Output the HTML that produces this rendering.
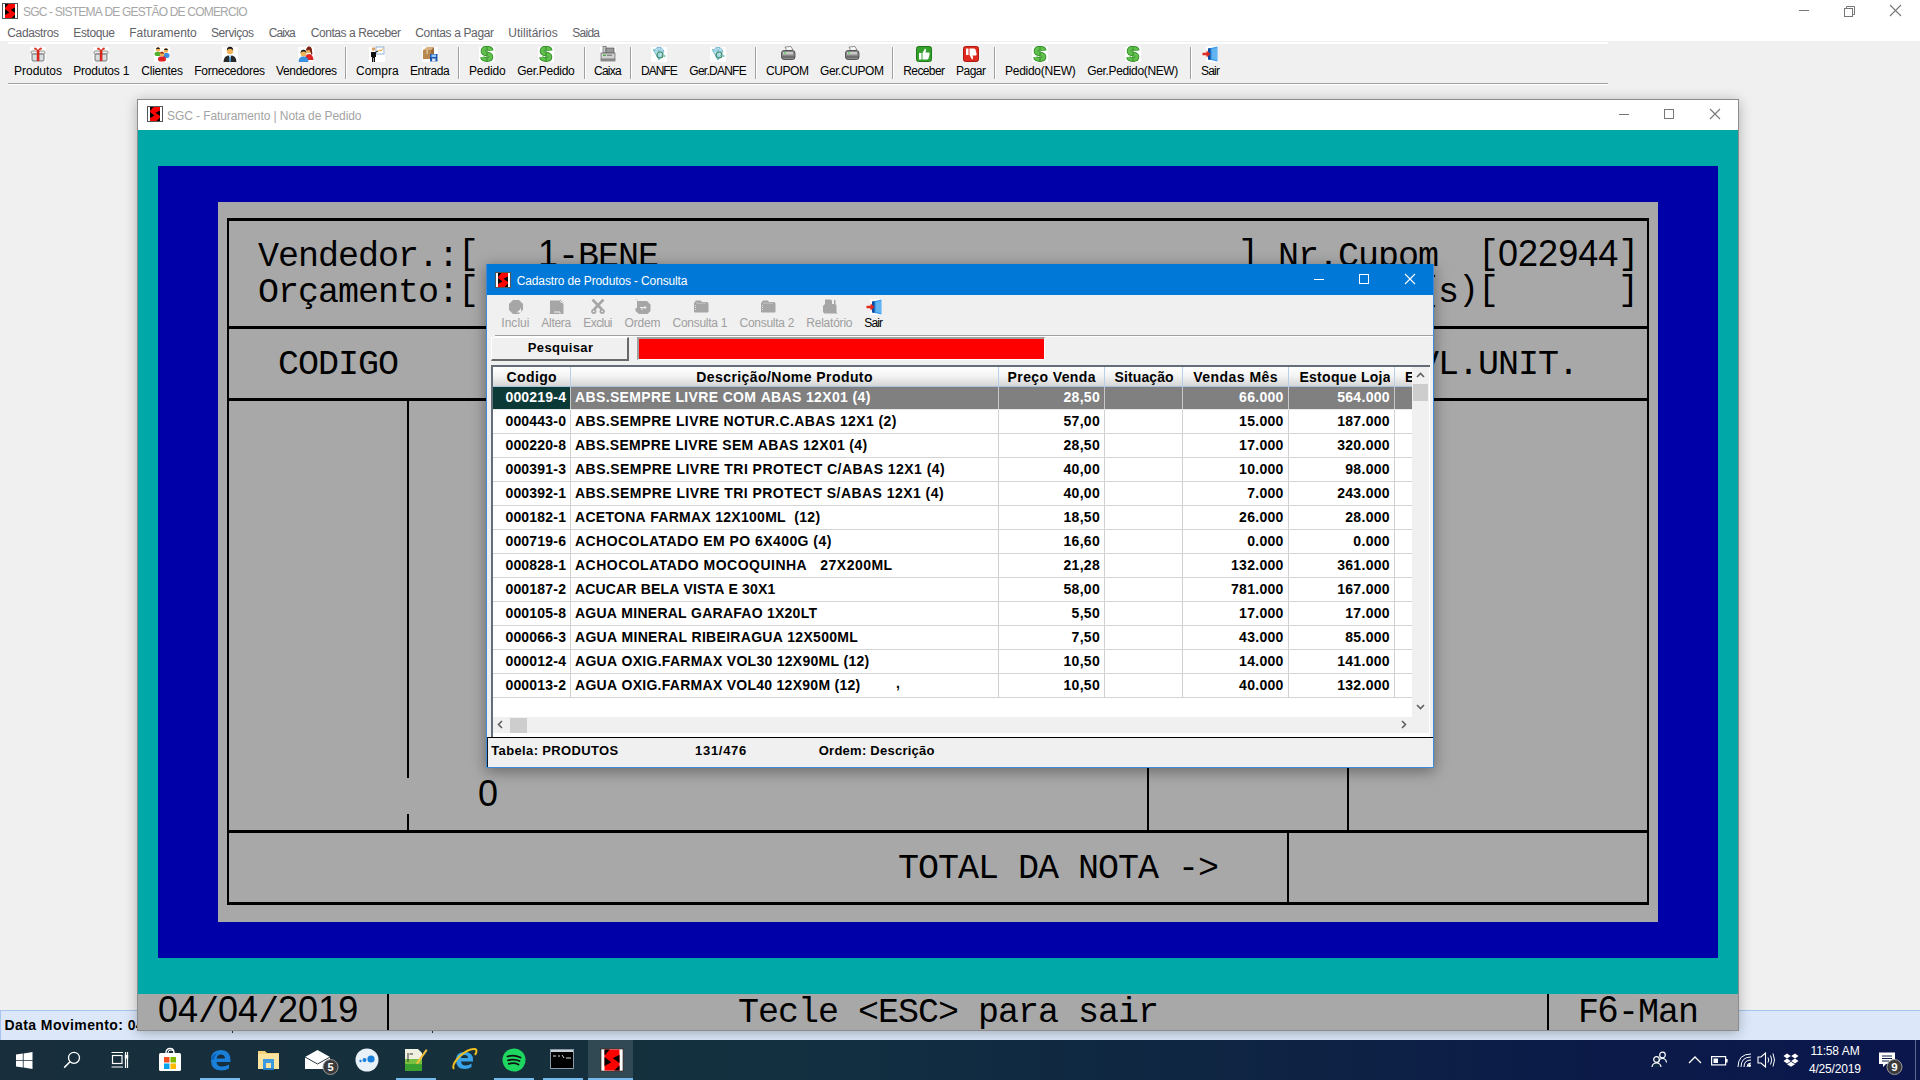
<!DOCTYPE html>
<html><head><meta charset="utf-8"><style>
*{margin:0;padding:0;box-sizing:border-box}
html,body{width:1920px;height:1080px;overflow:hidden;background:#f0f0f0;font-family:"Liberation Sans",sans-serif}
div{position:absolute}
.t{white-space:nowrap;line-height:20px;height:20px}
.z{font-family:'Liberation Sans',sans-serif;font-size:36px;letter-spacing:-0.016px;line-height:0}
.b{position:relative;top:-2px}
.dos{font-family:"Liberation Mono",monospace;font-size:35px;letter-spacing:-1px;line-height:36px;height:36px;white-space:nowrap;color:#000}
</style></head>
<body><div style="left:0px;top:0px;width:1920px;height:41px;background:#ffffff;"></div><div style="left:0px;top:41px;width:1920px;height:999px;background:#f0f0f0;"></div><svg style="position:absolute;left:2px;top:3px" width="16" height="16" viewBox="0 0 16 16"><rect x="0.5" y="0.5" width="15" height="15" fill="#fff" stroke="#555" stroke-width="1"/><rect x="3" y="1" width="10" height="14" fill="#f00"/><path d="M3 1 H6.5 L3 5Z M13 4.5 L8.5 6.8 L13 10Z M3 6 L7.5 9.5 L3 12Z M13 15 H9.5 L13 11.5Z" fill="#000"/></svg><div class="t" style="left:23.00px;top:2px;font-size:12px;font-weight:normal;color:#a6a6a6;letter-spacing:-0.805px;">SGC&nbsp;-&nbsp;SISTEMA&nbsp;DE&nbsp;GESTÃO&nbsp;DE&nbsp;COMERCIO</div><div style="left:1799px;top:10px;width:10px;height:1px;background:#777;"></div><svg style="position:absolute;left:1843px;top:4px" width="14" height="14" viewBox="0 0 14 14"><rect x="1.5" y="4.5" width="8" height="8" fill="none" stroke="#777"/><path d="M3.5 4.5 V2.5 H11.5 V10.5 H9.5" fill="none" stroke="#777"/></svg><svg style="position:absolute;left:1889px;top:4px" width="13" height="13" viewBox="0 0 13 13"><path d="M1 1 L12 12 M12 1 L1 12" stroke="#777" stroke-width="1.1"/></svg><div class="t" style="left:7.30px;top:23px;font-size:12px;font-weight:normal;color:#626268;letter-spacing:-0.374px;">Cadastros</div><div class="t" style="left:73.30px;top:23px;font-size:12px;font-weight:normal;color:#626268;letter-spacing:-0.389px;">Estoque</div><div class="t" style="left:129.30px;top:23px;font-size:12px;font-weight:normal;color:#626268;letter-spacing:-0.063px;">Faturamento</div><div class="t" style="left:211.00px;top:23px;font-size:12px;font-weight:normal;color:#626268;letter-spacing:-0.431px;">Serviços</div><div class="t" style="left:268.70px;top:23px;font-size:12px;font-weight:normal;color:#626268;letter-spacing:-0.920px;">Caixa</div><div class="t" style="left:310.70px;top:23px;font-size:12px;font-weight:normal;color:#626268;letter-spacing:-0.428px;">Contas&nbsp;a&nbsp;Receber</div><div class="t" style="left:415.30px;top:23px;font-size:12px;font-weight:normal;color:#626268;letter-spacing:-0.360px;">Contas&nbsp;a&nbsp;Pagar</div><div class="t" style="left:508.30px;top:23px;font-size:12px;font-weight:normal;color:#626268;letter-spacing:0.006px;">Utilitários</div><div class="t" style="left:572.30px;top:23px;font-size:12px;font-weight:normal;color:#626268;letter-spacing:-0.748px;">Saida</div><div style="left:8px;top:42px;width:1600px;height:2px;background:#ffffff;"></div><div style="left:8px;top:83px;width:1600px;height:1px;background:#a0a0a0;"></div><div style="left:8px;top:84px;width:1600px;height:1px;background:#ffffff;"></div><div style="left:345px;top:47px;width:1px;height:32px;background:#a0a0a0;"></div><div style="left:346px;top:47px;width:1px;height:32px;background:#ffffff;"></div><div style="left:458px;top:47px;width:1px;height:32px;background:#a0a0a0;"></div><div style="left:459px;top:47px;width:1px;height:32px;background:#ffffff;"></div><div style="left:584px;top:47px;width:1px;height:32px;background:#a0a0a0;"></div><div style="left:585px;top:47px;width:1px;height:32px;background:#ffffff;"></div><div style="left:630px;top:47px;width:1px;height:32px;background:#a0a0a0;"></div><div style="left:631px;top:47px;width:1px;height:32px;background:#ffffff;"></div><div style="left:755px;top:47px;width:1px;height:32px;background:#a0a0a0;"></div><div style="left:756px;top:47px;width:1px;height:32px;background:#ffffff;"></div><div style="left:892px;top:47px;width:1px;height:32px;background:#a0a0a0;"></div><div style="left:893px;top:47px;width:1px;height:32px;background:#ffffff;"></div><div style="left:994px;top:47px;width:1px;height:32px;background:#a0a0a0;"></div><div style="left:995px;top:47px;width:1px;height:32px;background:#ffffff;"></div><div style="left:1190px;top:47px;width:1px;height:32px;background:#a0a0a0;"></div><div style="left:1191px;top:47px;width:1px;height:32px;background:#ffffff;"></div><svg style="position:absolute;left:30px;top:46px" width="16" height="16" viewBox="0 0 16 16"><rect x="0" y="1" width="16" height="15" fill="#fff"/><rect x="1" y="5" width="14" height="3" rx="1" fill="#f4f4f4" stroke="#777" stroke-width="0.8"/><rect x="2" y="8" width="12" height="7" rx="1" fill="#d8dde0" stroke="#666" stroke-width="0.9"/><rect x="6.8" y="4" width="2.6" height="11" fill="#d8261c"/><path d="M8 4 Q5 0 4 2.5 Q4 4 8 4 Q12 4 12 2.5 Q11 0 8 4Z" fill="#e03a2a"/></svg><div class="t" style="left:14.00px;top:61px;font-size:12px;font-weight:normal;color:#000;letter-spacing:-0.004px;">Produtos</div><svg style="position:absolute;left:93px;top:46px" width="16" height="16" viewBox="0 0 16 16"><rect x="0" y="1" width="16" height="15" fill="#fff"/><rect x="1" y="5" width="14" height="3" rx="1" fill="#f4f4f4" stroke="#777" stroke-width="0.8"/><rect x="2" y="8" width="12" height="7" rx="1" fill="#d8dde0" stroke="#666" stroke-width="0.9"/><rect x="6.8" y="4" width="2.6" height="11" fill="#d8261c"/><path d="M8 4 Q5 0 4 2.5 Q4 4 8 4 Q12 4 12 2.5 Q11 0 8 4Z" fill="#e03a2a"/></svg><div class="t" style="left:73.30px;top:61px;font-size:12px;font-weight:normal;color:#000;letter-spacing:-0.226px;">Produtos&nbsp;1</div><svg style="position:absolute;left:154px;top:46px" width="16" height="16" viewBox="0 0 16 16"><rect x="0" y="1" width="16" height="15" fill="#fff"/><circle cx="4" cy="3.5" r="2.2" fill="#f0b050"/><path d="M1.8 3 Q4 -0.5 6.2 3" fill="#222"/><rect x="0.5" y="6" width="7" height="4" rx="2" fill="#4caf2a"/><circle cx="12" cy="4.5" r="2.2" fill="#f0b050"/><path d="M9.8 4 Q12 0.5 14.2 4" fill="#222"/><rect x="9" y="7" width="6.5" height="5" rx="2.5" fill="#3a8fe0"/><circle cx="8" cy="8" r="2.4" fill="#f0b050"/><path d="M5.6 7.5 Q8 4 10.4 7.5" fill="#8a2a10"/><rect x="4" y="10.5" width="8" height="5" rx="2.5" fill="#e02020"/></svg><div class="t" style="left:141.30px;top:61px;font-size:12px;font-weight:normal;color:#000;letter-spacing:-0.236px;">Clientes</div><svg style="position:absolute;left:222px;top:46px" width="16" height="16" viewBox="0 0 16 16"><rect x="0" y="1" width="16" height="15" fill="#fff"/><circle cx="8" cy="5" r="3.2" fill="#f2b45a"/><path d="M4.8 4.5 Q5 0.5 8 0.8 Q11 0.5 11.2 4.5 Q10 2.5 8 2.7 Q6 2.5 4.8 4.5Z" fill="#1a1a1a"/><path d="M1.5 16 Q1.5 9.5 8 9 Q14.5 9.5 14.5 16Z" fill="#2a2a2a"/><path d="M7 9.5 H9 L8.6 16 H7.4Z" fill="#5ab0f0"/><path d="M6 9.3 L8 11 L10 9.3" fill="#fff"/></svg><div class="t" style="left:194.30px;top:61px;font-size:12px;font-weight:normal;color:#000;letter-spacing:-0.303px;">Fornecedores</div><svg style="position:absolute;left:298px;top:46px" width="16" height="16" viewBox="0 0 16 16"><rect x="0" y="1" width="16" height="15" fill="#fff"/><circle cx="11" cy="4.5" r="2.8" fill="#f2b45a"/><path d="M8 4 Q9 0 11.5 0.5 Q14 1 14 5 Q15 8 13.5 9 Q13 6 11 3.5 Q9.5 5 8 4Z" fill="#7a1f10"/><path d="M7 14 Q7 8 11 8 Q15 8 15.5 14Z" fill="#e02222"/><circle cx="5.5" cy="7.5" r="3" fill="#f2b45a"/><path d="M2.5 7 Q3 3.5 5.5 3.8 Q8 3.5 8.5 7 Q7 5.5 5.5 5.6 Q4 5.5 2.5 7Z" fill="#1a1a1a"/><path d="M0.5 16 Q0.5 10.5 5.5 10.5 Q10.5 10.5 10.5 16Z" fill="#3a90e0"/></svg><div class="t" style="left:276.00px;top:61px;font-size:12px;font-weight:normal;color:#000;letter-spacing:-0.339px;">Vendedores</div><svg style="position:absolute;left:369px;top:46px" width="16" height="16" viewBox="0 0 16 16"><rect x="0" y="1" width="16" height="15" fill="#fff"/><rect x="7" y="1" width="8" height="7" fill="#fff" stroke="#7aa0d0" stroke-width="0.8"/><path d="M8.5 6 L10.5 4 L12 5 L14 2.5" stroke="#e0a020" fill="none"/><circle cx="4.5" cy="3" r="1.8" fill="#e0a060"/><path d="M2 6 H7 V11 H6 V16 H4.8 V12 H4.2 V16 H3 V11 H2Z" fill="#111"/><path d="M6 6.5 L9 5" stroke="#111" stroke-width="1"/></svg><div class="t" style="left:356.00px;top:61px;font-size:12px;font-weight:normal;color:#000;letter-spacing:0.004px;">Compra</div><svg style="position:absolute;left:422px;top:46px" width="16" height="16" viewBox="0 0 16 16"><rect x="0" y="1" width="16" height="15" fill="#fff"/><path d="M1 4 L5 1 H12 L9 4Z" fill="#d8b080"/><rect x="1" y="4" width="8" height="9" fill="#b88850"/><path d="M9 4 L12 1 V10 L9 13Z" fill="#9a6a38"/><rect x="4.5" y="4" width="1.2" height="4" fill="#e8d0a0"/><rect x="8" y="8" width="7.5" height="7.5" fill="#1a5ab0"/><rect x="9.5" y="8.5" width="4.5" height="2.5" fill="#9ac8f8"/><rect x="10" y="12.5" width="3.5" height="3" fill="#dde"/></svg><div class="t" style="left:410.00px;top:61px;font-size:12px;font-weight:normal;color:#000;letter-spacing:-0.388px;">Entrada</div><svg style="position:absolute;left:479px;top:46px" width="16" height="16" viewBox="0 0 16 16"><rect x="0" y="1" width="16" height="15" fill="#fff"/><path d="M12.3 4.6 Q11.8 2.2 8 2.2 Q4 2.2 4 5 Q4 7.6 8 8 Q12 8.4 12 11 Q12 13.6 8 13.6 Q4 13.6 3.4 11" fill="none" stroke="#2e8a22" stroke-width="4.6"/><path d="M12.3 4.6 Q11.8 2.2 8 2.2 Q4 2.2 4 5 Q4 7.6 8 8 Q12 8.4 12 11 Q12 13.6 8 13.6 Q4 13.6 3.4 11" fill="none" stroke="#62c04e" stroke-width="3"/><path d="M8 1 V15" stroke="#3a9a2a" stroke-width="1.2"/></svg><div class="t" style="left:469.00px;top:61px;font-size:12px;font-weight:normal;color:#000;letter-spacing:-0.133px;">Pedido</div><svg style="position:absolute;left:538px;top:46px" width="16" height="16" viewBox="0 0 16 16"><rect x="0" y="1" width="16" height="15" fill="#fff"/><path d="M12.3 4.6 Q11.8 2.2 8 2.2 Q4 2.2 4 5 Q4 7.6 8 8 Q12 8.4 12 11 Q12 13.6 8 13.6 Q4 13.6 3.4 11" fill="none" stroke="#2e8a22" stroke-width="4.6"/><path d="M12.3 4.6 Q11.8 2.2 8 2.2 Q4 2.2 4 5 Q4 7.6 8 8 Q12 8.4 12 11 Q12 13.6 8 13.6 Q4 13.6 3.4 11" fill="none" stroke="#62c04e" stroke-width="3"/><path d="M8 1 V15" stroke="#3a9a2a" stroke-width="1.2"/></svg><div class="t" style="left:517.30px;top:61px;font-size:12px;font-weight:normal;color:#000;letter-spacing:-0.293px;">Ger.Pedido</div><svg style="position:absolute;left:600px;top:46px" width="16" height="16" viewBox="0 0 16 16"><rect x="0" y="1" width="16" height="15" fill="#fff"/><rect x="3" y="0.5" width="3" height="6" fill="#ccc" stroke="#666" stroke-width="0.7"/><rect x="6" y="2" width="8" height="5" fill="#999" stroke="#555" stroke-width="0.7"/><rect x="1" y="7" width="14" height="6" fill="#d0d0d0" stroke="#666" stroke-width="0.8"/><rect x="3" y="8.5" width="3" height="1.5" fill="#5a5"/><rect x="7" y="8.5" width="5" height="1.5" fill="#888"/><rect x="0.5" y="13" width="15" height="2.5" fill="#888"/></svg><div class="t" style="left:594.00px;top:61px;font-size:12px;font-weight:normal;color:#000;letter-spacing:-0.745px;">Caixa</div><svg style="position:absolute;left:651px;top:46px" width="16" height="16" viewBox="0 0 16 16"><rect x="0" y="1" width="16" height="15" fill="#fff"/><path d="M3 5 L6 1.5 H10 L13 5 L8 14Z" fill="#bfe4f0" stroke="#6ab0cc" stroke-width="0.8"/><path d="M3 5 H13 M6 1.5 L8 5 L10 1.5 M8 5 V14" stroke="#6ab0cc" stroke-width="0.6" fill="none"/><circle cx="9" cy="9" r="3" fill="none" stroke="#3a8a5a" stroke-width="1.2"/><circle cx="3" cy="4" r="1.2" fill="#8cc"/><circle cx="13.5" cy="10" r="1.2" fill="#8cc"/></svg><div class="t" style="left:641.00px;top:61px;font-size:12px;font-weight:normal;color:#000;letter-spacing:-0.993px;">DANFE</div><svg style="position:absolute;left:710px;top:46px" width="16" height="16" viewBox="0 0 16 16"><rect x="0" y="1" width="16" height="15" fill="#fff"/><path d="M3 5 L6 1.5 H10 L13 5 L8 14Z" fill="#bfe4f0" stroke="#6ab0cc" stroke-width="0.8"/><path d="M3 5 H13 M6 1.5 L8 5 L10 1.5 M8 5 V14" stroke="#6ab0cc" stroke-width="0.6" fill="none"/><circle cx="9" cy="9" r="3" fill="none" stroke="#3a8a5a" stroke-width="1.2"/><circle cx="3" cy="4" r="1.2" fill="#8cc"/><circle cx="13.5" cy="10" r="1.2" fill="#8cc"/></svg><div class="t" style="left:689.30px;top:61px;font-size:12px;font-weight:normal;color:#000;letter-spacing:-0.743px;">Ger.DANFE</div><svg style="position:absolute;left:780px;top:46px" width="16" height="16" viewBox="0 0 16 16"><path d="M5 1 L11 0.5 L13 4 L7 5Z" fill="#fafafa" stroke="#666" stroke-width="0.7"/><path d="M1.5 7 Q1.5 4.5 4 4.5 H12.5 Q15 4.5 15 7 V11 Q15 13.5 12.5 13.5 H4 Q1.5 13.5 1.5 11Z" fill="#888" stroke="#444" stroke-width="0.8"/><rect x="3" y="6" width="10" height="2.5" fill="#c8c8c8"/><rect x="4" y="6.3" width="2" height="1" fill="#3c3"/><path d="M2 11 H15" stroke="#555" stroke-width="1"/></svg><div class="t" style="left:766.00px;top:61px;font-size:12px;font-weight:normal;color:#000;letter-spacing:-0.417px;">CUPOM</div><svg style="position:absolute;left:844px;top:46px" width="16" height="16" viewBox="0 0 16 16"><path d="M5 1 L11 0.5 L13 4 L7 5Z" fill="#fafafa" stroke="#666" stroke-width="0.7"/><path d="M1.5 7 Q1.5 4.5 4 4.5 H12.5 Q15 4.5 15 7 V11 Q15 13.5 12.5 13.5 H4 Q1.5 13.5 1.5 11Z" fill="#888" stroke="#444" stroke-width="0.8"/><rect x="3" y="6" width="10" height="2.5" fill="#c8c8c8"/><rect x="4" y="6.3" width="2" height="1" fill="#3c3"/><path d="M2 11 H15" stroke="#555" stroke-width="1"/></svg><div class="t" style="left:820.00px;top:61px;font-size:12px;font-weight:normal;color:#000;letter-spacing:-0.418px;">Ger.CUPOM</div><svg style="position:absolute;left:916px;top:46px" width="16" height="16" viewBox="0 0 16 16"><rect x="0.5" y="0.5" width="15" height="15" rx="2" fill="#34a02c" stroke="#1e7a1a"/><path d="M3 7 H5.5 V13.5 H3Z" fill="#fff"/><path d="M6.5 13.5 V7 L9 2.5 Q10.5 2.5 10 5 L9.5 6.5 H13 Q14 7 13.5 8.5 L12.5 12.5 Q12 13.5 11 13.5Z" fill="#fff"/></svg><div class="t" style="left:903.30px;top:61px;font-size:12px;font-weight:normal;color:#000;letter-spacing:-0.609px;">Receber</div><svg style="position:absolute;left:963px;top:46px" width="16" height="16" viewBox="0 0 16 16"><rect x="0.5" y="0.5" width="15" height="15" rx="2" fill="#e02a1e" stroke="#aa1a10"/><path d="M3 2.5 H5.5 V9 H3Z" fill="#fff"/><path d="M6.5 2.5 V9 L9 13.5 Q10.5 13.5 10 11 L9.5 9.5 H13 Q14 9 13.5 7.5 L12.5 3.5 Q12 2.5 11 2.5Z" fill="#fff"/></svg><div class="t" style="left:956.00px;top:61px;font-size:12px;font-weight:normal;color:#000;letter-spacing:-0.505px;">Pagar</div><svg style="position:absolute;left:1032px;top:46px" width="16" height="16" viewBox="0 0 16 16"><rect x="0" y="1" width="16" height="15" fill="#fff"/><path d="M12.3 4.6 Q11.8 2.2 8 2.2 Q4 2.2 4 5 Q4 7.6 8 8 Q12 8.4 12 11 Q12 13.6 8 13.6 Q4 13.6 3.4 11" fill="none" stroke="#2e8a22" stroke-width="4.6"/><path d="M12.3 4.6 Q11.8 2.2 8 2.2 Q4 2.2 4 5 Q4 7.6 8 8 Q12 8.4 12 11 Q12 13.6 8 13.6 Q4 13.6 3.4 11" fill="none" stroke="#62c04e" stroke-width="3"/><path d="M8 1 V15" stroke="#3a9a2a" stroke-width="1.2"/></svg><div class="t" style="left:1005.00px;top:61px;font-size:12px;font-weight:normal;color:#000;letter-spacing:-0.265px;">Pedido(NEW)</div><svg style="position:absolute;left:1125px;top:46px" width="16" height="16" viewBox="0 0 16 16"><rect x="0" y="1" width="16" height="15" fill="#fff"/><path d="M12.3 4.6 Q11.8 2.2 8 2.2 Q4 2.2 4 5 Q4 7.6 8 8 Q12 8.4 12 11 Q12 13.6 8 13.6 Q4 13.6 3.4 11" fill="none" stroke="#2e8a22" stroke-width="4.6"/><path d="M12.3 4.6 Q11.8 2.2 8 2.2 Q4 2.2 4 5 Q4 7.6 8 8 Q12 8.4 12 11 Q12 13.6 8 13.6 Q4 13.6 3.4 11" fill="none" stroke="#62c04e" stroke-width="3"/><path d="M8 1 V15" stroke="#3a9a2a" stroke-width="1.2"/></svg><div class="t" style="left:1087.30px;top:61px;font-size:12px;font-weight:normal;color:#000;letter-spacing:-0.359px;">Ger.Pedido(NEW)</div><svg style="position:absolute;left:1202px;top:46px" width="16" height="16" viewBox="0 0 16 16"><rect x="4" y="0" width="12" height="16" fill="#fff"/><path d="M6.5 2.5 L15.5 0.5 V15.5 L6.5 13.5Z" fill="#3a9ae8"/><path d="M10 3 L15 1.8 V14.2 L10 13Z" fill="#62b4f0"/><path d="M6 2.5 L8.5 2 V14 L6 13.5Z" fill="#0a4aa0"/><path d="M0.5 6.8 H4.5 V4.5 L8.5 8 L4.5 11.5 V9.2 H0.5Z" fill="#e02a20"/></svg><div class="t" style="left:1201.00px;top:61px;font-size:12px;font-weight:normal;color:#000;letter-spacing:-0.780px;">Sair</div><div style="left:0px;top:1010px;width:1920px;height:30px;background:#dce8fa;"></div><div style="left:0px;top:1010px;width:1920px;height:1px;background:#a6c4ee;"></div><div style="left:0px;top:1010px;width:1px;height:30px;background:#a6c4ee;"></div><div class="t" style="left:4.60px;top:1015px;font-size:14px;font-weight:bold;color:#000;letter-spacing:0.000px;letter-spacing:0.4px">Data&nbsp;Movimento:&nbsp;04/04/2019</div><div style="left:232px;top:1030px;width:1px;height:3px;background:#333;"></div><div style="left:432px;top:1030px;width:1px;height:3px;background:#333;"></div><div style="left:137px;top:99px;width:1602px;height:932px;box-shadow:0 2px 12px rgba(0,0,0,0.28)"></div><div style="left:137px;top:99px;width:1602px;height:932px;background:#8c8c8c;"></div><div style="left:138px;top:100px;width:1600px;height:30px;background:#ffffff;"></div><svg style="position:absolute;left:147px;top:106px" width="16" height="16" viewBox="0 0 16 16"><rect x="0.5" y="0.5" width="15" height="15" fill="#fff" stroke="#555" stroke-width="1"/><rect x="3" y="1" width="10" height="14" fill="#f00"/><path d="M3 1 H6.5 L3 5Z M13 4.5 L8.5 6.8 L13 10Z M3 6 L7.5 9.5 L3 12Z M13 15 H9.5 L13 11.5Z" fill="#000"/></svg><div class="t" style="left:167.00px;top:106px;font-size:12px;font-weight:normal;color:#a3a3a3;letter-spacing:-0.082px;">SGC&nbsp;-&nbsp;Faturamento&nbsp;|&nbsp;Nota&nbsp;de&nbsp;Pedido</div><div style="left:1619px;top:114px;width:10px;height:1px;background:#777;"></div><svg style="position:absolute;left:1663px;top:108px" width="12" height="12" viewBox="0 0 12 12"><rect x="1.5" y="1.5" width="9" height="9" fill="none" stroke="#777"/></svg><svg style="position:absolute;left:1709px;top:108px" width="12" height="12" viewBox="0 0 12 12"><path d="M1 1 L11 11 M11 1 L1 11" stroke="#777" stroke-width="1.1"/></svg><div style="left:138px;top:130px;width:1600px;height:900px;background:#00a8a8;"></div><div style="left:158px;top:166px;width:1560px;height:792px;background:#0000a8;"></div><div style="left:218px;top:202px;width:1440px;height:720px;background:#a8a8a8;"></div><div style="left:138px;top:994px;width:1600px;height:36px;background:#a8a8a8;"></div><div style="left:227px;top:218px;width:1422px;height:3px;background:#000;"></div><div style="left:227px;top:326px;width:1422px;height:3px;background:#000;"></div><div style="left:227px;top:398px;width:1422px;height:3px;background:#000;"></div><div style="left:227px;top:830px;width:1422px;height:3px;background:#000;"></div><div style="left:227px;top:902px;width:1422px;height:3px;background:#000;"></div><div style="left:227px;top:218px;width:2px;height:687px;background:#000;"></div><div style="left:1647px;top:218px;width:2px;height:687px;background:#000;"></div><div style="left:407px;top:398px;width:2px;height:380px;background:#000;"></div><div style="left:407px;top:814px;width:2px;height:19px;background:#000;"></div><div style="left:1147px;top:398px;width:2px;height:435px;background:#000;"></div><div style="left:1347px;top:398px;width:2px;height:435px;background:#000;"></div><div style="left:1287px;top:830px;width:2px;height:75px;background:#000;"></div><div style="left:387px;top:994px;width:2px;height:36px;background:#000;"></div><div style="left:1547px;top:994px;width:2px;height:36px;background:#000;"></div><div class="dos" style="left:258px;top:239px">Vendedor.:<span class="b">[</span></div><div class="dos" style="left:538px;top:239px"><span class="z">1</span>-BENE</div><div class="dos" style="left:1238px;top:239px"><span class="b">]</span>&nbsp;Nr.Cupom&nbsp;&nbsp;<span class="b">[</span><span class="z">0</span><span class="z">2</span><span class="z">2</span><span class="z">9</span><span class="z">4</span><span class="z">4</span><span class="b">]</span></div><div class="dos" style="left:258px;top:275px">Orçamento:<span class="b">[</span></div><div class="dos" style="left:1418px;top:275px"><span class="b">(</span>s<span class="b">)</span><span class="b">[</span>&nbsp;&nbsp;&nbsp;&nbsp;&nbsp;&nbsp;<span class="b">]</span></div><svg style="position:absolute;left:1422px;top:274px" width="14" height="34" viewBox="0 0 14 34"><path d="M12.5 1 Q-6 17 12.5 33" fill="none" stroke="#000" stroke-width="2.8"/></svg><div class="dos" style="left:278px;top:347px">CODIGO</div><div class="dos" style="left:1418px;top:347px">VL.UNIT.</div><div class="dos" style="left:478px;top:779px"><span class="z">0</span></div><div class="dos" style="left:898px;top:851px">TOTAL&nbsp;DA&nbsp;NOTA&nbsp;-&gt;</div><div class="dos" style="left:158px;top:995px"><span class="z">0</span><span class="z">4</span>/<span class="z">0</span><span class="z">4</span>/<span class="z">2</span><span class="z">0</span><span class="z">1</span><span class="z">9</span></div><div class="dos" style="left:738px;top:995px">Tecle&nbsp;&lt;ESC&gt;&nbsp;para&nbsp;sair</div><div class="dos" style="left:1578px;top:995px">F<span class="z">6</span>-Man</div><div style="left:486px;top:264px;width:948px;height:504px;box-shadow:0 3px 14px rgba(0,0,0,0.40)"></div><div style="left:486px;top:264px;width:948px;height:504px;background:#3c8ad8;"></div><div style="left:487px;top:264px;width:946px;height:31px;background:#0078d7;"></div><div style="left:487px;top:295px;width:946px;height:472px;background:#f0f0f0;"></div><svg style="position:absolute;left:495px;top:272px" width="16" height="16" viewBox="0 0 16 16"><rect x="0.5" y="0.5" width="15" height="15" fill="#fff" stroke="#555" stroke-width="1"/><rect x="3" y="1" width="10" height="14" fill="#f00"/><path d="M3 1 H6.5 L3 5Z M13 4.5 L8.5 6.8 L13 10Z M3 6 L7.5 9.5 L3 12Z M13 15 H9.5 L13 11.5Z" fill="#000"/></svg><div class="t" style="left:516.75px;top:271px;font-size:12px;font-weight:normal;color:#ffffff;letter-spacing:-0.134px;">Cadastro&nbsp;de&nbsp;Produtos&nbsp;-&nbsp;Consulta</div><div style="left:1314px;top:279px;width:10px;height:1px;background:#fff;"></div><svg style="position:absolute;left:1358px;top:273px" width="12" height="12" viewBox="0 0 12 12"><rect x="1.5" y="1.5" width="9" height="9" fill="none" stroke="#fff"/></svg><svg style="position:absolute;left:1404px;top:273px" width="12" height="12" viewBox="0 0 12 12"><path d="M1 1 L11 11 M11 1 L1 11" stroke="#fff" stroke-width="1.1"/></svg><svg style="position:absolute;left:508px;top:299px" width="16" height="16" viewBox="0 0 16 16"><path d="M5 1 H11 L15 5 V10.5 L11 15 H5 L1 11 V5Z" fill="#a6a6a6"/><path d="M8.5 13.5 L13 9 V13.5Z" fill="#f0f0f0"/><path d="M9.5 12.5 L12 10" stroke="#a6a6a6" stroke-width="1"/></svg><div class="t" style="left:501.25px;top:313px;font-size:12px;font-weight:normal;color:#9e9e9e;letter-spacing:0.048px;">Inclui</div><svg style="position:absolute;left:549px;top:299px" width="16" height="16" viewBox="0 0 16 16"><path d="M1 1.5 H10 L11 0.5 L13.5 3 V4 L14.5 5 V15 H0.5 V14 H1Z" fill="#a6a6a6"/><path d="M10.5 1.5 L13 4" stroke="#f0f0f0" stroke-width="1"/><path d="M5 13 H11 V14.5" fill="none" stroke="#f0f0f0" stroke-width="1"/></svg><div class="t" style="left:541.25px;top:313px;font-size:12px;font-weight:normal;color:#9e9e9e;letter-spacing:-0.270px;">Altera</div><svg style="position:absolute;left:590px;top:299px" width="16" height="16" viewBox="0 0 16 16"><path d="M2.5 0.5 L12 10.5 M13.5 0.5 L4 10.5" stroke="#a6a6a6" stroke-width="2.6"/><circle cx="3.8" cy="12.3" r="2.6" fill="#a6a6a6"/><circle cx="12.2" cy="12.3" r="2.6" fill="#a6a6a6"/><circle cx="3.8" cy="12.3" r="0.9" fill="#f0f0f0"/><circle cx="12.2" cy="12.3" r="0.9" fill="#f0f0f0"/></svg><div class="t" style="left:583.25px;top:313px;font-size:12px;font-weight:normal;color:#9e9e9e;letter-spacing:-0.552px;">Exclui</div><svg style="position:absolute;left:635px;top:299px" width="16" height="16" viewBox="0 0 16 16"><path d="M0.5 0.5 L3 2 H12 L15.5 5.5 V12 L12.5 15 L4 15 L0.5 12 V9 H2 V0.5Z" fill="#a6a6a6"/><path d="M5 8.5 H11 M9.5 7 L11 8.5 L9.5 10 M6 10 H8" stroke="#f0f0f0" stroke-width="1" fill="none"/></svg><div class="t" style="left:624.50px;top:313px;font-size:12px;font-weight:normal;color:#9e9e9e;letter-spacing:-0.169px;">Ordem</div><svg style="position:absolute;left:693px;top:299px" width="16" height="16" viewBox="0 0 16 16"><path d="M1 4 L3 1.5 H8 L9 3 H14 Q15.5 3 15.5 4.5 V12.5 Q15.5 13.5 14.5 13.5 H2 Q1 13.5 1 12.5Z" fill="#a6a6a6"/><path d="M3.5 4.2 H13.5 M2.5 6 V12" stroke="#f0f0f0" stroke-width="0.8" stroke-dasharray="1 1"/></svg><div class="t" style="left:672.50px;top:313px;font-size:12px;font-weight:normal;color:#9e9e9e;letter-spacing:-0.263px;">Consulta&nbsp;1</div><svg style="position:absolute;left:760px;top:299px" width="16" height="16" viewBox="0 0 16 16"><path d="M1 4 L3 1.5 H8 L9 3 H14 Q15.5 3 15.5 4.5 V12.5 Q15.5 13.5 14.5 13.5 H2 Q1 13.5 1 12.5Z" fill="#a6a6a6"/><path d="M3.5 4.2 H13.5 M2.5 6 V12" stroke="#f0f0f0" stroke-width="0.8" stroke-dasharray="1 1"/></svg><div class="t" style="left:739.50px;top:313px;font-size:12px;font-weight:normal;color:#9e9e9e;letter-spacing:-0.263px;">Consulta&nbsp;2</div><svg style="position:absolute;left:822px;top:299px" width="16" height="16" viewBox="0 0 16 16"><path d="M3 0.5 H9 L10 2 V5 H12 V1 H13.5 V5 L14.5 6.5 V13 L15.5 14.5 H2.5 L1 13 V7 L3 5Z" fill="#a6a6a6"/></svg><div class="t" style="left:806.25px;top:313px;font-size:12px;font-weight:normal;color:#9e9e9e;letter-spacing:-0.221px;">Relatório</div><svg style="position:absolute;left:866px;top:299px" width="16" height="16" viewBox="0 0 16 16"><rect x="4" y="0" width="12" height="16" fill="#fff"/><path d="M6.5 2.5 L15.5 0.5 V15.5 L6.5 13.5Z" fill="#3a9ae8"/><path d="M10 3 L15 1.8 V14.2 L10 13Z" fill="#62b4f0"/><path d="M6 2.5 L8.5 2 V14 L6 13.5Z" fill="#0a4aa0"/><path d="M0.5 6.8 H4.5 V4.5 L8.5 8 L4.5 11.5 V9.2 H0.5Z" fill="#e02a20"/></svg><div class="t" style="left:864.25px;top:313px;font-size:12px;font-weight:normal;color:#000;letter-spacing:-0.864px;">Sair</div><div style="left:495px;top:335px;width:938px;height:1px;background:#a0a0a0;"></div><div style="left:495px;top:336px;width:938px;height:1px;background:#ffffff;"></div><div style="left:491px;top:337px;width:138px;height:24px;background:#f0f0f0;border-top:1px solid #fff;border-left:1px solid #fff;border-right:2px solid #696969;border-bottom:2px solid #696969"></div><div class="t" style="left:527.80px;top:338px;font-size:13px;font-weight:bold;color:#000;letter-spacing:0.382px;">Pesquisar</div><div style="left:637px;top:337px;width:408px;height:23px;background:#ff0000;border-top:2px solid #a0a0a0;border-left:2px solid #a0a0a0;border-bottom:1px solid #fff;border-right:1px solid #fff"></div><div style="left:491px;top:365px;width:939px;height:373px;background:#ffffff;"></div><div style="left:491px;top:365px;width:939px;height:2px;background:#646e78;"></div><div style="left:491px;top:365px;width:2px;height:373px;background:#646e78;"></div><div style="left:493px;top:367px;width:919px;height:19px;background:linear-gradient(#ffffff,#f4f4f4 45%,#d6d6d6)"></div><div style="left:493px;top:386px;width:919px;height:1px;background:#a8c4e0;"></div><div style="left:570px;top:367px;width:1px;height:19px;background:#b8d0ea;"></div><div style="left:570px;top:387px;width:1px;height:311px;background:#d0d0d0;"></div><div style="left:998px;top:367px;width:1px;height:19px;background:#b8d0ea;"></div><div style="left:998px;top:387px;width:1px;height:311px;background:#d0d0d0;"></div><div style="left:1104px;top:367px;width:1px;height:19px;background:#b8d0ea;"></div><div style="left:1104px;top:387px;width:1px;height:311px;background:#d0d0d0;"></div><div style="left:1182px;top:367px;width:1px;height:19px;background:#b8d0ea;"></div><div style="left:1182px;top:387px;width:1px;height:311px;background:#d0d0d0;"></div><div style="left:1288px;top:367px;width:1px;height:19px;background:#b8d0ea;"></div><div style="left:1288px;top:387px;width:1px;height:311px;background:#d0d0d0;"></div><div style="left:1394px;top:367px;width:1px;height:19px;background:#b8d0ea;"></div><div style="left:1394px;top:387px;width:1px;height:311px;background:#d0d0d0;"></div><div class="t" style="left:506.60px;top:367px;font-size:14px;font-weight:bold;color:#000;letter-spacing:0.359px;">Codigo</div><div class="t" style="left:696.25px;top:367px;font-size:14px;font-weight:bold;color:#000;letter-spacing:0.428px;">Descrição/Nome&nbsp;Produto</div><div class="t" style="left:1007.60px;top:367px;font-size:14px;font-weight:bold;color:#000;letter-spacing:0.386px;">Preço&nbsp;Venda</div><div class="t" style="left:1114.60px;top:367px;font-size:14px;font-weight:bold;color:#000;letter-spacing:0.093px;">Situação</div><div class="t" style="left:1193.20px;top:367px;font-size:14px;font-weight:bold;color:#000;letter-spacing:0.472px;">Vendas&nbsp;Mês</div><div style="left:1288px;top:367px;width:102px;height:19px;overflow:hidden"><div class="t" style="left:11.4px;top:0px;font-size:14px;font-weight:bold;letter-spacing:0.3px;line-height:20px;top:0">Estoque&nbsp;Loja</div></div><div style="left:1395px;top:367px;width:17px;height:19px;overflow:hidden"><div class="t" style="left:10px;top:0px;font-size:14px;font-weight:bold;line-height:20px">E</div></div><div style="left:493px;top:387px;width:77px;height:22px;background:#0c3a36;"></div><div style="left:571px;top:387px;width:841px;height:22px;background:#808080;"></div><div style="left:493px;top:409px;width:919px;height:1px;background:#e8e8e8;"></div><div class="t" style="left:505.40px;top:387px;font-size:14px;font-weight:bold;color:#ffffff;letter-spacing:0.205px;">000219-4</div><div class="t" style="left:575.00px;top:387px;font-size:14px;font-weight:bold;color:#ffffff;letter-spacing:0.357px;">ABS.SEMPRE&nbsp;LIVRE&nbsp;COM&nbsp;ABAS&nbsp;12X01&nbsp;(4)</div><div class="t" style="left:1063.47px;top:387px;font-size:14px;font-weight:bold;color:#ffffff;letter-spacing:0.300px;">28,50</div><div class="t" style="left:1239.08px;top:387px;font-size:14px;font-weight:bold;color:#ffffff;letter-spacing:0.300px;">66.000</div><div class="t" style="left:1337.20px;top:387px;font-size:14px;font-weight:bold;color:#ffffff;letter-spacing:0.300px;">564.000</div><div style="left:493px;top:433px;width:919px;height:1px;background:#d4d4d4;"></div><div class="t" style="left:505.40px;top:411px;font-size:14px;font-weight:bold;color:#000000;letter-spacing:0.205px;">000443-0</div><div class="t" style="left:575.00px;top:411px;font-size:14px;font-weight:bold;color:#000000;letter-spacing:0.403px;">ABS.SEMPRE&nbsp;LIVRE&nbsp;NOTUR.C.ABAS&nbsp;12X1&nbsp;(2)</div><div class="t" style="left:1063.47px;top:411px;font-size:14px;font-weight:bold;color:#000000;letter-spacing:0.300px;">57,00</div><div class="t" style="left:1239.08px;top:411px;font-size:14px;font-weight:bold;color:#000000;letter-spacing:0.300px;">15.000</div><div class="t" style="left:1337.20px;top:411px;font-size:14px;font-weight:bold;color:#000000;letter-spacing:0.300px;">187.000</div><div style="left:493px;top:457px;width:919px;height:1px;background:#d4d4d4;"></div><div class="t" style="left:505.40px;top:435px;font-size:14px;font-weight:bold;color:#000000;letter-spacing:0.205px;">000220-8</div><div class="t" style="left:575.00px;top:435px;font-size:14px;font-weight:bold;color:#000000;letter-spacing:0.332px;">ABS.SEMPRE&nbsp;LIVRE&nbsp;SEM&nbsp;ABAS&nbsp;12X01&nbsp;(4)</div><div class="t" style="left:1063.47px;top:435px;font-size:14px;font-weight:bold;color:#000000;letter-spacing:0.300px;">28,50</div><div class="t" style="left:1239.08px;top:435px;font-size:14px;font-weight:bold;color:#000000;letter-spacing:0.300px;">17.000</div><div class="t" style="left:1337.20px;top:435px;font-size:14px;font-weight:bold;color:#000000;letter-spacing:0.300px;">320.000</div><div style="left:493px;top:481px;width:919px;height:1px;background:#d4d4d4;"></div><div class="t" style="left:505.40px;top:459px;font-size:14px;font-weight:bold;color:#000000;letter-spacing:0.205px;">000391-3</div><div class="t" style="left:575.00px;top:459px;font-size:14px;font-weight:bold;color:#000000;letter-spacing:0.457px;">ABS.SEMPRE&nbsp;LIVRE&nbsp;TRI&nbsp;PROTECT&nbsp;C/ABAS&nbsp;12X1&nbsp;(4)</div><div class="t" style="left:1063.47px;top:459px;font-size:14px;font-weight:bold;color:#000000;letter-spacing:0.300px;">40,00</div><div class="t" style="left:1239.08px;top:459px;font-size:14px;font-weight:bold;color:#000000;letter-spacing:0.300px;">10.000</div><div class="t" style="left:1345.28px;top:459px;font-size:14px;font-weight:bold;color:#000000;letter-spacing:0.300px;">98.000</div><div style="left:493px;top:505px;width:919px;height:1px;background:#d4d4d4;"></div><div class="t" style="left:505.40px;top:483px;font-size:14px;font-weight:bold;color:#000000;letter-spacing:0.205px;">000392-1</div><div class="t" style="left:575.00px;top:483px;font-size:14px;font-weight:bold;color:#000000;letter-spacing:0.449px;">ABS.SEMPRE&nbsp;LIVRE&nbsp;TRI&nbsp;PROTECT&nbsp;S/ABAS&nbsp;12X1&nbsp;(4)</div><div class="t" style="left:1063.47px;top:483px;font-size:14px;font-weight:bold;color:#000000;letter-spacing:0.300px;">40,00</div><div class="t" style="left:1247.17px;top:483px;font-size:14px;font-weight:bold;color:#000000;letter-spacing:0.300px;">7.000</div><div class="t" style="left:1337.20px;top:483px;font-size:14px;font-weight:bold;color:#000000;letter-spacing:0.300px;">243.000</div><div style="left:493px;top:529px;width:919px;height:1px;background:#d4d4d4;"></div><div class="t" style="left:505.40px;top:507px;font-size:14px;font-weight:bold;color:#000000;letter-spacing:0.205px;">000182-1</div><div class="t" style="left:575.00px;top:507px;font-size:14px;font-weight:bold;color:#000000;letter-spacing:0.288px;">ACETONA&nbsp;FARMAX&nbsp;12X100ML&nbsp;&nbsp;(12)</div><div class="t" style="left:1063.47px;top:507px;font-size:14px;font-weight:bold;color:#000000;letter-spacing:0.300px;">18,50</div><div class="t" style="left:1239.08px;top:507px;font-size:14px;font-weight:bold;color:#000000;letter-spacing:0.300px;">26.000</div><div class="t" style="left:1345.28px;top:507px;font-size:14px;font-weight:bold;color:#000000;letter-spacing:0.300px;">28.000</div><div style="left:493px;top:553px;width:919px;height:1px;background:#d4d4d4;"></div><div class="t" style="left:505.40px;top:531px;font-size:14px;font-weight:bold;color:#000000;letter-spacing:0.205px;">000719-6</div><div class="t" style="left:575.00px;top:531px;font-size:14px;font-weight:bold;color:#000000;letter-spacing:0.449px;">ACHOCOLATADO&nbsp;EM&nbsp;PO&nbsp;6X400G&nbsp;(4)</div><div class="t" style="left:1063.47px;top:531px;font-size:14px;font-weight:bold;color:#000000;letter-spacing:0.300px;">16,60</div><div class="t" style="left:1247.17px;top:531px;font-size:14px;font-weight:bold;color:#000000;letter-spacing:0.300px;">0.000</div><div class="t" style="left:1353.37px;top:531px;font-size:14px;font-weight:bold;color:#000000;letter-spacing:0.300px;">0.000</div><div style="left:493px;top:577px;width:919px;height:1px;background:#d4d4d4;"></div><div class="t" style="left:505.40px;top:555px;font-size:14px;font-weight:bold;color:#000000;letter-spacing:0.205px;">000828-1</div><div class="t" style="left:575.00px;top:555px;font-size:14px;font-weight:bold;color:#000000;letter-spacing:0.480px;">ACHOCOLATADO&nbsp;MOCOQUINHA&nbsp;&nbsp;&nbsp;27X200ML</div><div class="t" style="left:1063.47px;top:555px;font-size:14px;font-weight:bold;color:#000000;letter-spacing:0.300px;">21,28</div><div class="t" style="left:1231.00px;top:555px;font-size:14px;font-weight:bold;color:#000000;letter-spacing:0.300px;">132.000</div><div class="t" style="left:1337.20px;top:555px;font-size:14px;font-weight:bold;color:#000000;letter-spacing:0.300px;">361.000</div><div style="left:493px;top:601px;width:919px;height:1px;background:#d4d4d4;"></div><div class="t" style="left:505.40px;top:579px;font-size:14px;font-weight:bold;color:#000000;letter-spacing:0.205px;">000187-2</div><div class="t" style="left:575.00px;top:579px;font-size:14px;font-weight:bold;color:#000000;letter-spacing:0.160px;">ACUCAR&nbsp;BELA&nbsp;VISTA&nbsp;E&nbsp;30X1</div><div class="t" style="left:1063.47px;top:579px;font-size:14px;font-weight:bold;color:#000000;letter-spacing:0.300px;">58,00</div><div class="t" style="left:1231.00px;top:579px;font-size:14px;font-weight:bold;color:#000000;letter-spacing:0.300px;">781.000</div><div class="t" style="left:1337.20px;top:579px;font-size:14px;font-weight:bold;color:#000000;letter-spacing:0.300px;">167.000</div><div style="left:493px;top:625px;width:919px;height:1px;background:#d4d4d4;"></div><div class="t" style="left:505.40px;top:603px;font-size:14px;font-weight:bold;color:#000000;letter-spacing:0.205px;">000105-8</div><div class="t" style="left:575.00px;top:603px;font-size:14px;font-weight:bold;color:#000000;letter-spacing:0.252px;">AGUA&nbsp;MINERAL&nbsp;GARAFAO&nbsp;1X20LT</div><div class="t" style="left:1071.55px;top:603px;font-size:14px;font-weight:bold;color:#000000;letter-spacing:0.300px;">5,50</div><div class="t" style="left:1239.08px;top:603px;font-size:14px;font-weight:bold;color:#000000;letter-spacing:0.300px;">17.000</div><div class="t" style="left:1345.28px;top:603px;font-size:14px;font-weight:bold;color:#000000;letter-spacing:0.300px;">17.000</div><div style="left:493px;top:649px;width:919px;height:1px;background:#d4d4d4;"></div><div class="t" style="left:505.40px;top:627px;font-size:14px;font-weight:bold;color:#000000;letter-spacing:0.205px;">000066-3</div><div class="t" style="left:575.00px;top:627px;font-size:14px;font-weight:bold;color:#000000;letter-spacing:0.290px;">AGUA&nbsp;MINERAL&nbsp;RIBEIRAGUA&nbsp;12X500ML</div><div class="t" style="left:1071.55px;top:627px;font-size:14px;font-weight:bold;color:#000000;letter-spacing:0.300px;">7,50</div><div class="t" style="left:1239.08px;top:627px;font-size:14px;font-weight:bold;color:#000000;letter-spacing:0.300px;">43.000</div><div class="t" style="left:1345.28px;top:627px;font-size:14px;font-weight:bold;color:#000000;letter-spacing:0.300px;">85.000</div><div style="left:493px;top:673px;width:919px;height:1px;background:#d4d4d4;"></div><div class="t" style="left:505.40px;top:651px;font-size:14px;font-weight:bold;color:#000000;letter-spacing:0.205px;">000012-4</div><div class="t" style="left:575.00px;top:651px;font-size:14px;font-weight:bold;color:#000000;letter-spacing:0.281px;">AGUA&nbsp;OXIG.FARMAX&nbsp;VOL30&nbsp;12X90ML&nbsp;(12)</div><div class="t" style="left:1063.47px;top:651px;font-size:14px;font-weight:bold;color:#000000;letter-spacing:0.300px;">10,50</div><div class="t" style="left:1239.08px;top:651px;font-size:14px;font-weight:bold;color:#000000;letter-spacing:0.300px;">14.000</div><div class="t" style="left:1337.20px;top:651px;font-size:14px;font-weight:bold;color:#000000;letter-spacing:0.300px;">141.000</div><div style="left:493px;top:697px;width:919px;height:1px;background:#d4d4d4;"></div><div class="t" style="left:505.40px;top:675px;font-size:14px;font-weight:bold;color:#000000;letter-spacing:0.205px;">000013-2</div><div class="t" style="left:575.00px;top:675px;font-size:14px;font-weight:bold;color:#000000;letter-spacing:0.274px;">AGUA&nbsp;OXIG.FARMAX&nbsp;VOL40&nbsp;12X90M&nbsp;(12)</div><div class="t" style="left:1063.47px;top:675px;font-size:14px;font-weight:bold;color:#000000;letter-spacing:0.300px;">10,50</div><div class="t" style="left:1239.08px;top:675px;font-size:14px;font-weight:bold;color:#000000;letter-spacing:0.300px;">40.000</div><div class="t" style="left:1337.20px;top:675px;font-size:14px;font-weight:bold;color:#000000;letter-spacing:0.300px;">132.000</div><div class="t" style="left:896.00px;top:673px;font-size:14px;font-weight:bold;color:#000;letter-spacing:0.000px;">,</div><div style="left:570px;top:387px;width:1px;height:22px;background:#c8c8c8;"></div><div style="left:998px;top:387px;width:1px;height:22px;background:#c8c8c8;"></div><div style="left:1104px;top:387px;width:1px;height:22px;background:#c8c8c8;"></div><div style="left:1182px;top:387px;width:1px;height:22px;background:#c8c8c8;"></div><div style="left:1288px;top:387px;width:1px;height:22px;background:#c8c8c8;"></div><div style="left:1394px;top:387px;width:1px;height:22px;background:#c8c8c8;"></div><div style="left:1412px;top:367px;width:17px;height:350px;background:#f0f0f0;"></div><svg style="position:absolute;left:1414px;top:369px" width="13" height="13" viewBox="0 0 13 13"><path d="M3 8 L6.5 4.5 L10 8" stroke="#606060" stroke-width="1.6" fill="none"/></svg><div style="left:1413px;top:384px;width:15px;height:17px;background:#cdcdcd;"></div><svg style="position:absolute;left:1414px;top:700px" width="13" height="13" viewBox="0 0 13 13"><path d="M3 5 L6.5 8.5 L10 5" stroke="#606060" stroke-width="1.6" fill="none"/></svg><div style="left:493px;top:717px;width:919px;height:16px;background:#f0f0f0;"></div><div style="left:1412px;top:717px;width:17px;height:16px;background:#f0f0f0;"></div><svg style="position:absolute;left:494px;top:718px" width="13" height="13" viewBox="0 0 13 13"><path d="M8 3 L4.5 6.5 L8 10" stroke="#606060" stroke-width="1.6" fill="none"/></svg><div style="left:510px;top:718px;width:17px;height:15px;background:#cdcdcd;"></div><svg style="position:absolute;left:1397px;top:718px" width="13" height="13" viewBox="0 0 13 13"><path d="M5 3 L8.5 6.5 L5 10" stroke="#606060" stroke-width="1.6" fill="none"/></svg><div style="left:487px;top:737px;width:946px;height:1px;background:#000;"></div><div style="left:487px;top:737px;width:1px;height:30px;background:#1a1a1a;"></div><div class="t" style="left:491.25px;top:741px;font-size:13px;font-weight:bold;color:#000;letter-spacing:0.360px;">Tabela:&nbsp;PRODUTOS</div><div class="t" style="left:695.00px;top:741px;font-size:13px;font-weight:bold;color:#000;letter-spacing:0.710px;">131/476</div><div class="t" style="left:818.75px;top:741px;font-size:13px;font-weight:bold;color:#000;letter-spacing:0.251px;">Ordem:&nbsp;Descrição</div><div style="left:0;top:1040px;width:1920px;height:40px;background:linear-gradient(90deg,#182e3c 0%,#15303c 30%,#123040 40%,#0f2642 62%,#0c1c48 80%,#0a164c 100%)"></div><svg style="position:absolute;left:16px;top:1052px" width="17" height="17" viewBox="0 0 17 17"><path d="M0 2.4 L6.8 1.5 V8 H0Z M7.6 1.4 L16.5 0 V8 H7.6Z M0 8.8 H6.8 V15.4 L0 14.5Z M7.6 8.8 H16.5 V17 L7.6 15.6Z" fill="#fff"/></svg><svg style="position:absolute;left:63px;top:1051px" width="18" height="18" viewBox="0 0 18 18"><circle cx="11" cy="6.8" r="5.5" fill="none" stroke="#fff" stroke-width="1.3"/><path d="M7 10.8 L1.2 16.6" stroke="#fff" stroke-width="1.5"/></svg><svg style="position:absolute;left:111px;top:1051px" width="18" height="18" viewBox="0 0 18 18"><rect x="1.5" y="4.5" width="9.5" height="8" fill="none" stroke="#fff" stroke-width="1.2"/><path d="M0.5 1.5 H12 M0.5 16 H12 M14.5 1 V17 M16.5 1 V17" stroke="#fff" stroke-width="1.2"/><rect x="13.8" y="4" width="3.4" height="3.5" fill="#fff"/></svg><svg style="position:absolute;left:158px;top:1047px" width="26" height="26" viewBox="0 0 26 26"><path d="M8 6 Q8 1.5 12 1.5 Q16 1.5 16 6" fill="none" stroke="#fff" stroke-width="1.4"/><path d="M10 6 Q10 3 13 3 Q16 3 16 6" fill="none" stroke="#fff" stroke-width="1"/><rect x="1" y="6" width="22" height="18" rx="1.5" fill="#fff"/><rect x="6" y="10" width="5.5" height="5.5" fill="#f25022"/><rect x="12.5" y="10" width="5.5" height="5.5" fill="#7fba00"/><rect x="6" y="16.5" width="5.5" height="5.5" fill="#00a4ef"/><rect x="12.5" y="16.5" width="5.5" height="5.5" fill="#ffb900"/></svg><svg style="position:absolute;left:209px;top:1048px" width="23" height="23" viewBox="0 0 23 23"><path d="M2 12 Q2 2 12 2 Q21.5 2 21.5 12.5 V14 H7.5 Q8 18.5 13 18.5 Q17 18.5 20 16.5 V20.5 Q17 22.5 12 22.5 Q2 22.5 2 12Z M7.6 10.5 H16 Q15.8 6.5 12 6.5 Q8.2 6.5 7.6 10.5Z" fill="#1a7fd8"/><path d="M2 12 Q3 6 8 5.5 Q5 8 4.5 12Z" fill="#0a5fb8"/></svg><div style="left:200px;top:1078px;width:40px;height:2px;background:#76b9ed;"></div><svg style="position:absolute;left:257px;top:1049px" width="24" height="22" viewBox="0 0 24 22"><path d="M1 2 H8 L10 4 H22 V20 H1Z" fill="#f3d27a"/><rect x="1" y="5" width="21" height="15" fill="#fbe3a0"/><path d="M6 10 H17 V19 H14 V14 H9 V19 H6Z" fill="#3c9ae0"/><rect x="6" y="19" width="11" height="2" fill="#2a80c8"/></svg><svg style="position:absolute;left:304px;top:1049px" width="36" height="28" viewBox="0 0 36 28"><path d="M1 8 L13.5 1 L26 8 V20 H1Z" fill="#fff"/><path d="M1 8 L13.5 15 L26 8" fill="none" stroke="#2a3a48" stroke-width="1"/><circle cx="26.5" cy="18" r="7.5" fill="#3a3a3a" stroke="#9a9a9a" stroke-width="1"/><text x="26.5" y="22" font-family="Liberation Sans" font-size="11" font-weight="bold" fill="#fff" text-anchor="middle">5</text></svg><svg style="position:absolute;left:355px;top:1048px" width="24" height="24" viewBox="0 0 24 24"><circle cx="12" cy="12" r="11.5" fill="#e8f0f8"/><circle cx="16" cy="11" r="3.6" fill="#1a7fd8"/><circle cx="9.5" cy="12" r="2" fill="#1a7fd8"/><circle cx="5.5" cy="13" r="1.2" fill="#1a7fd8"/></svg><svg style="position:absolute;left:404px;top:1047px" width="24" height="25" viewBox="0 0 24 25"><path d="M1 2 H14 L18 6 V24 H1Z" fill="#f0f0e0"/><rect x="1" y="12" width="17" height="12" fill="#7ac040"/><rect x="1" y="17" width="17" height="7" fill="#3aa030"/><path d="M4 6 V15 M5.5 7 H9" stroke="#333" stroke-width="1"/><path d="M12 16 L22 2 L23.5 3.5 L13.5 17.5Z" fill="#f0c040"/></svg><div style="left:396px;top:1078px;width:40px;height:2px;background:#76b9ed;"></div><svg style="position:absolute;left:452px;top:1047px" width="26" height="25" viewBox="0 0 26 25"><path d="M4 12.5 Q4 5 12.5 5 Q21 5 21 13 V14.5 H9 Q9.5 18.5 13.5 18.5 Q17 18.5 19.5 16.5 V20 Q17 22 12.5 22 Q4 22 4 12.5Z M9 11 H16 Q16 8 12.5 8 Q9 8 9 11Z" fill="#3aa4e8"/><path d="M2 22 Q-1 18 8 9 Q17 1 23 2 Q26 3 23 8" fill="none" stroke="#f0c020" stroke-width="2"/></svg><svg style="position:absolute;left:502px;top:1048px" width="24" height="24" viewBox="0 0 24 24"><circle cx="12" cy="12" r="11.5" fill="#1ed760"/><path d="M5.5 8.5 Q12 6.5 18.5 9.5 M6 12.3 Q12 10.5 17.5 13 M6.8 15.8 Q12 14.3 16.5 16.5" fill="none" stroke="#111" stroke-width="1.8" stroke-linecap="round"/></svg><div style="left:494px;top:1078px;width:40px;height:2px;background:#76b9ed;"></div><svg style="position:absolute;left:550px;top:1049px" width="25" height="21" viewBox="0 0 25 21"><rect x="0.5" y="0.5" width="23" height="19" fill="#000" stroke="#8a9aa8" stroke-width="1"/><rect x="1" y="1" width="22" height="2" fill="#c8d0d8"/><path d="M3 7 H6 M8 7 H10 M12 6 L14 9 M16 9 H21" stroke="#ddd" stroke-width="1"/></svg><div style="left:543px;top:1078px;width:40px;height:2px;background:#76b9ed;"></div><div style="left:588px;top:1040px;width:45px;height:40px;background:rgba(255,255,255,0.12);"></div><div style="left:588px;top:1078px;width:45px;height:2px;background:#76b9ed;"></div><svg style="position:absolute;left:600px;top:1048px" width="24" height="24" viewBox="0 0 24 24"><g transform="scale(1.5)"><rect x="0.5" y="0.5" width="15" height="15" fill="#fff" stroke="#333" stroke-width="0.8"/><rect x="3" y="1" width="10" height="14" fill="#f00"/><path d="M3 1 H6.5 L3 5Z M13 4.5 L8.5 6.8 L13 10Z M3 6 L7.5 9.5 L3 12Z M13 15 H9.5 L13 11.5Z" fill="#000"/></g></svg><div style="left:1915px;top:1040px;width:1px;height:40px;background:rgba(255,255,255,0.35);"></div><svg style="position:absolute;left:1651px;top:1051px" width="17" height="17" viewBox="0 0 17 17"><circle cx="11.5" cy="4" r="2.8" fill="none" stroke="#fff" stroke-width="1.2"/><path d="M7.5 11.5 Q8 7.5 11.5 7.5 Q15 7.5 15.5 11.5" fill="none" stroke="#fff" stroke-width="1.2"/><circle cx="5.5" cy="8.5" r="2.8" fill="#0f2642" stroke="#fff" stroke-width="1.2"/><path d="M1 16 Q1.5 12 5.5 12 Q9.5 12 10 16" fill="#0f2642" stroke="#fff" stroke-width="1.2"/></svg><svg style="position:absolute;left:1688px;top:1055px" width="14" height="9" viewBox="0 0 14 9"><path d="M1 8 L7 2 L13 8" fill="none" stroke="#fff" stroke-width="1.3"/></svg><svg style="position:absolute;left:1711px;top:1056px" width="17" height="10" viewBox="0 0 17 10"><rect x="0.6" y="0.6" width="14" height="8.3" fill="none" stroke="#fff" stroke-width="1.2"/><rect x="2.5" y="2.5" width="4.5" height="4.5" fill="#fff"/><rect x="15" y="3" width="1.6" height="3.5" fill="#fff"/></svg><svg style="position:absolute;left:1737px;top:1053px" width="15" height="15" viewBox="0 0 15 15"><path d="M1 14 Q1 1 14 1 M4 14 Q4 4 14 4 M7 14 Q7 7 14 7 M10 14 Q10 10 14 10" fill="none" stroke="#fff" stroke-width="1"/><circle cx="12.5" cy="12.5" r="1.5" fill="#fff"/></svg><svg style="position:absolute;left:1757px;top:1052px" width="19" height="16" viewBox="0 0 19 16"><path d="M1 5 H4 L8.5 1 V15 L4 11 H1Z" fill="none" stroke="#fff" stroke-width="1.1"/><path d="M11 5.5 Q12.5 8 11 10.5 M13.5 3.5 Q16 8 13.5 12.5 M16 1.5 Q19 8 16 14.5" fill="none" stroke="#fff" stroke-width="1"/></svg><svg style="position:absolute;left:1783px;top:1053px" width="16" height="14" viewBox="0 0 16 14"><path d="M4 0.5 L0.5 3 L4 5.5 L7.8 3Z M12 0.5 L15.5 3 L12 5.5 L8.2 3Z M4 5.5 L0.5 8 L4 10.5 L7.8 8Z M12 5.5 L15.5 8 L12 10.5 L8.2 8Z M4 11.3 L8 13.8 L12 11.3 L8 8.8Z" fill="#fff"/></svg><div class="t" style="left:1810.60px;top:1041px;font-size:12px;font-weight:normal;color:#fff;letter-spacing:-0.202px;">11:58&nbsp;AM</div><div class="t" style="left:1808.90px;top:1059px;font-size:12px;font-weight:normal;color:#fff;letter-spacing:-0.160px;">4/25/2019</div><svg style="position:absolute;left:1878px;top:1051px" width="28" height="26" viewBox="0 0 28 26"><path d="M1 1.5 H17 V13 H8 L5 16 V13 H1Z" fill="#fff"/><path d="M4 5 H14 M4 7.5 H14 M4 10 H11" stroke="#0c1c48" stroke-width="1"/><circle cx="16.5" cy="16" r="7.5" fill="#3a3a3a" stroke="#9a9a9a" stroke-width="1"/><text x="16.5" y="20.2" font-family="Liberation Sans" font-size="11.5" font-weight="bold" fill="#fff" text-anchor="middle">9</text></svg></body></html>
